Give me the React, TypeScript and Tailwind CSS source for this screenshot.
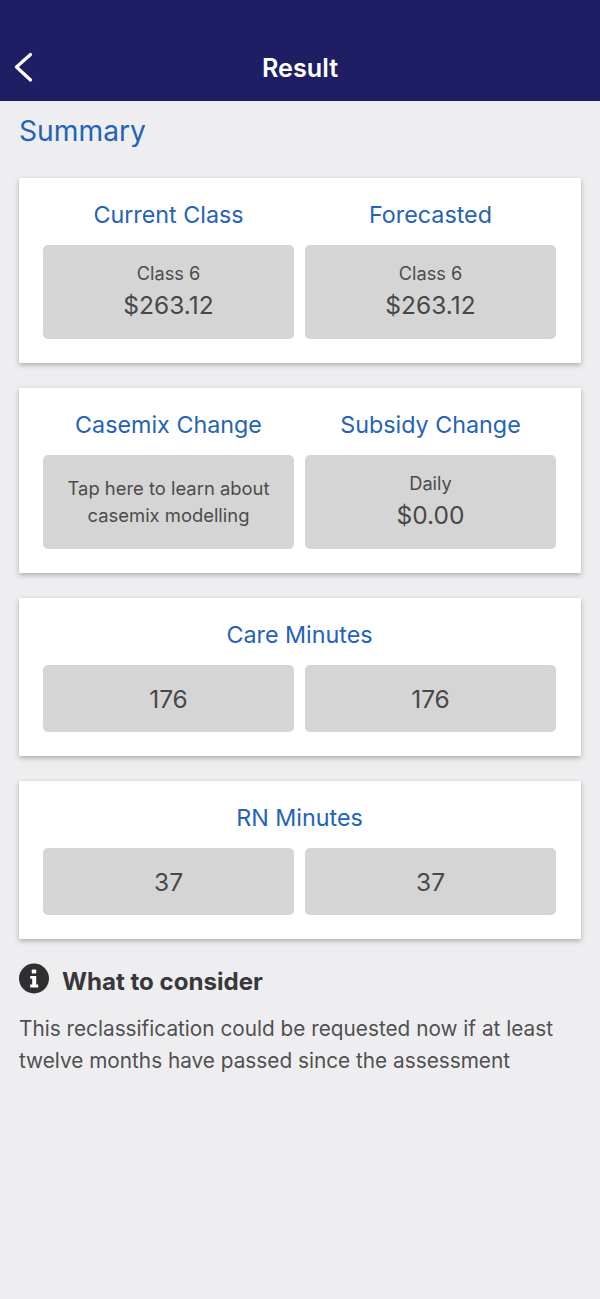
import React from "react";

const font = { fontFamily: '"Inter", "Liberation Sans", sans-serif' };

function Box({ children, tall }: { children: React.ReactNode; tall?: boolean }) {
  return (
    <div className={`flex flex-col items-center justify-center rounded-[5px] bg-[#d5d5d5] text-[#484848] ${tall ? "h-[94px]" : "h-[67px]"}`}>
      {children}
    </div>
  );
}

function Money({ label, value }: { label: string; value: string }) {
  return (
    <Box tall>
      <div className="flex flex-col items-center pb-[3px]">
        <span className="text-[18.2px] leading-[24px] text-[#4c4c4c]">{label}</span>
        <span className="mt-[5px] text-[24.5px] leading-[30px]">{value}</span>
      </div>
    </Box>
  );
}

function Col({ title, children }: { title: string; children: React.ReactNode }) {
  return (
    <div className="min-w-0 flex-1">
      <div className="mb-[15px] text-center text-[23.3px] leading-[30px] text-[#2463b5]">{title}</div>
      {children}
    </div>
  );
}

function Card({ children }: { children: React.ReactNode }) {
  return (
    <div className="bg-white pb-[24px] pl-[24px] pr-[25px] pt-[22px] shadow-[0_2px_5px_rgba(0,0,0,0.28)]">
      {children}
    </div>
  );
}

function Pair({ left, right }: { left: React.ReactNode; right: React.ReactNode }) {
  return (
    <div className="flex gap-[11px]">
      {left}
      {right}
    </div>
  );
}

function MinutesCard({ title, value }: { title: string; value: string }) {
  return (
    <Card>
      <div className="mb-[15px] text-center text-[23.3px] leading-[30px] text-[#2463b5]">{title}</div>
      <div className="flex gap-[11px]">
        <div className="flex-1"><Box><span className="mt-[1px] text-[24.5px]">{value}</span></Box></div>
        <div className="flex-1"><Box><span className="mt-[1px] text-[24.5px]">{value}</span></Box></div>
      </div>
    </Card>
  );
}

export default function App() {
  return (
    <div style={font} className="min-h-[1299px] w-[600px] bg-[#eeeef0]">
      <div className="relative flex h-[101px] items-end justify-center bg-[#1f1d63] pb-[18px]">
        <svg className="absolute left-[13px] top-[52px]" width="20" height="30" viewBox="0 0 20 30" fill="none">
          <path d="M17.5 2.5 L3.5 15 L17.5 28" stroke="white" strokeWidth="3.2" strokeLinecap="round" strokeLinejoin="round" />
        </svg>
        <span className="text-[25.2px] font-semibold leading-[30px] text-white">Result</span>
      </div>
      <div className="px-[19px]">
        <div className="mb-[28px] mt-[11px] text-[28.2px] leading-[38px] text-[#2463b5]">Summary</div>
        <div className="flex flex-col gap-[25px]">
          <Card>
            <Pair
              left={<Col title="Current Class"><Money label="Class 6" value="$263.12" /></Col>}
              right={<Col title="Forecasted"><Money label="Class 6" value="$263.12" /></Col>}
            />
          </Card>
          <Card>
            <Pair
              left={
                <Col title="Casemix Change">
                  <Box tall>
                    <span className="text-center text-[18.4px] leading-[27px] text-[#4c4c4c]">
                      Tap here to learn about
                      <br />
                      casemix modelling
                    </span>
                  </Box>
                </Col>
              }
              right={<Col title="Subsidy Change"><Money label="Daily" value="$0.00" /></Col>}
            />
          </Card>
          <MinutesCard title="Care Minutes" value="176" />
          <MinutesCard title="RN Minutes" value="37" />
        </div>
        <div className="mt-[24px] flex items-start">
          <svg width="30" height="31" viewBox="0 0 30 31" className="shrink-0">
            <circle cx="15" cy="15.5" r="15" fill="#2f2f31" />
            <rect x="12.7" y="6.6" width="4.6" height="4" rx="1" fill="white" />
            <path d="M11.2 13 H17.2 V21.6 H19.2 V24.4 H11.2 V21.6 H13.2 V15.8 H11.2 Z" fill="white" />
          </svg>
          <span className="ml-[13px] mt-[3px] text-[24.1px] font-bold leading-[32px] text-[#38383a]">What to consider</span>
        </div>
        <p className="mt-[15px] text-[20.77px] leading-[32px] text-[#505052]">
          This reclassification could be requested now if at least
          <br />
          twelve months have passed since the assessment
        </p>
      </div>
    </div>
  );
}
